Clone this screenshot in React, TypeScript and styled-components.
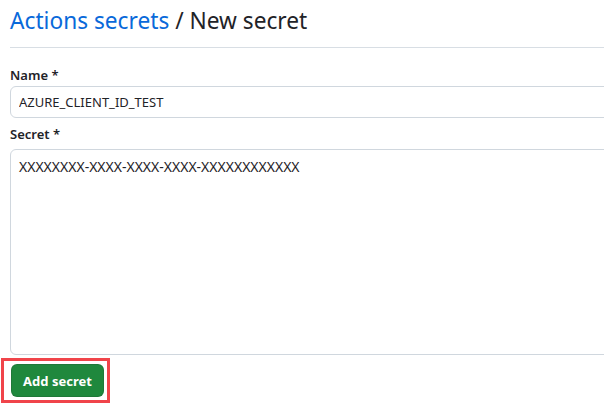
import React from "react";
import styled, { createGlobalStyle } from "styled-components";

const Global = createGlobalStyle`
  html, body { margin: 0; padding: 0; background: #ffffff; }
  body { overflow: hidden; font-family: "Noto Sans", "Open Sans", sans-serif; color: #1f2328; }
`;

const Page = styled.div`
  width: 604px;
  height: 414px;
  overflow: hidden;
  padding-left: 10px;
  box-sizing: border-box;
  display: flex;
  flex-direction: column;
`;

const Subhead = styled.div`
  margin-top: 3px;
  margin-right: -20px;
  padding-bottom: 8px;
  border-bottom: 1px solid #d8dee4;
`;

const Heading = styled.h2`
  margin: 0;
  font-size: 22.7px;
  font-weight: 400;
  line-height: 36px;
  color: #1f2328;
`;

const Crumb = styled.a`
  color: #0969da;
  text-decoration: none;
`;

const Field = styled.div<{ $top: number }>`
  display: flex;
  flex-direction: column;
  margin-top: ${(p) => p.$top}px;
  margin-right: -20px;
`;

const Label = styled.label`
  font-size: 13px;
  font-weight: 600;
  line-height: 20px;
  color: #1f2328;
`;

const TextInput = styled.input`
  margin-top: 1px;
  height: 32px;
  box-sizing: border-box;
  padding: 0 8px;
  font: inherit;
  font-size: 13px;
  line-height: 20px;
  color: #1f2328;
  background: #ffffff;
  border: 1px solid #d0d7de;
  border-radius: 6px;
  outline: none;
`;

const TextArea = styled.textarea`
  margin-top: 5px;
  height: 206px;
  box-sizing: border-box;
  padding: 7px 8px;
  font: inherit;
  font-size: 14px;
  line-height: 20px;
  color: #1f2328;
  background: #ffffff;
  border: 1px solid #d0d7de;
  border-radius: 6px;
  resize: none;
  outline: none;
`;

const Highlight = styled.div`
  align-self: flex-start;
  margin: 3px 0 0 -9px;
  padding: 3px 3px 3px 7px;
  border: 3px solid #f0444a;
  display: flex;
`;

const PrimaryButton = styled.button`
  height: 33px;
  width: 93px;
  padding: 0;
  border: 1px solid rgba(31, 35, 40, 0.15);
  border-radius: 6px;
  background: #1f883d;
  color: #ffffff;
  font-family: inherit;
  font-size: 13px;
  font-weight: 700;
  line-height: 20px;
  cursor: pointer;
`;

export default function App() {
  return (
    <>
      <Global />
      <Page>
        <Subhead>
          <Heading>
            <Crumb href="#">Actions secrets</Crumb> / New secret
          </Heading>
        </Subhead>
        <Field $top={17}>
          <Label htmlFor="name">Name *</Label>
          <TextInput id="name" defaultValue="AZURE_CLIENT_ID_TEST" />
        </Field>
        <Field $top={6}>
          <Label htmlFor="secret">Secret *</Label>
          <TextArea
            id="secret"
            defaultValue="XXXXXXXX-XXXX-XXXX-XXXX-XXXXXXXXXXXX"
          />
        </Field>
        <Highlight>
          <PrimaryButton type="button">Add secret</PrimaryButton>
        </Highlight>
      </Page>
    </>
  );
}
